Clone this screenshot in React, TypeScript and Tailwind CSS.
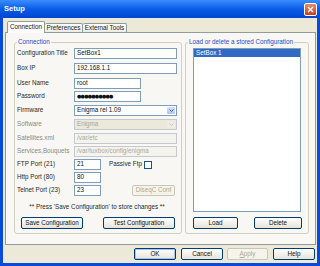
import type { ReactNode } from "react";

const LABEL = "text-[#2a2a2a]";
const DIM = "text-[#8a8a80]";

function XpButton({
  children,
  className,
  disabled,
  isDefault,
}: {
  children: ReactNode;
  className: string;
  disabled?: boolean;
  isDefault?: boolean;
}) {
  if (disabled) {
    return (
      <div
        className={`flex h-[12px] shrink-0 items-center justify-center rounded-[2px] border border-[#c9c7ba] bg-[#f5f4ea] text-[#aca899] ${className}`}
      >
        {children}
      </div>
    );
  }
  return (
    <div
      className={`flex h-[12px] shrink-0 items-center justify-center rounded-[2px] border border-[#003c74] bg-linear-to-b from-white to-[#e6e3d8] text-[#111] ${
        isDefault ? "shadow-[inset_0_0_0_1px_#a9c2ef]" : ""
      } ${className}`}
    >
      {children}
    </div>
  );
}

function Field({
  value,
  className,
  disabled,
  children,
}: {
  value?: string;
  className: string;
  disabled?: boolean;
  children?: ReactNode;
}) {
  return (
    <div
      className={`flex h-[11px] shrink-0 items-center border pl-[2px] ${
        disabled
          ? "border-[#c4c9cf] bg-[#f4f3ee] text-[#aca899]"
          : "border-[#7f9db9] bg-white text-[#111]"
      } ${className}`}
    >
      {children ?? value}
    </div>
  );
}

function Combo({ value, disabled }: { value: string; disabled?: boolean }) {
  return (
    <div
      className={`flex h-[11px] w-[103px] shrink-0 items-stretch border ${
        disabled ? "border-[#c4c9cf] bg-[#ebe9da] text-[#aca899]" : "border-[#7f9db9] bg-white text-[#111]"
      }`}
    >
      <span className="flex flex-1 items-center pl-[2px]">{value}</span>
      <span
        className={`m-px flex w-[8px] items-center justify-center rounded-[1px] ${
          disabled ? "bg-[#eeede5]" : "bg-linear-to-b from-[#d2e0fd] to-[#b1c6f6]"
        }`}
      >
        <svg width="5" height="3" viewBox="0 0 5 3">
          <path
            d="M0.5 0.5 L2.5 2.5 L4.5 0.5"
            fill="none"
            stroke={disabled ? "#c9c7ba" : "#4d6185"}
            strokeWidth="1"
          />
        </svg>
      </span>
    </div>
  );
}

function Row({
  label,
  className,
  dim,
  children,
}: {
  label: string;
  className: string;
  dim?: boolean;
  children: ReactNode;
}) {
  return (
    <div className={`flex h-[11px] items-center ${className}`}>
      <span className={`w-[57px] shrink-0 whitespace-nowrap ${dim ? DIM : LABEL}`}>{label}</span>
      {children}
    </div>
  );
}

function GroupBox({
  title,
  className,
  children,
}: {
  title: string;
  className: string;
  children: ReactNode;
}) {
  return (
    <div className={`relative flex h-[192px] shrink-0 flex-col rounded-[3px] border border-[#d0d0bf] pt-[5px] ${className}`}>
      <span className="absolute -top-[5px] left-[2px] bg-[#f8f7f3] px-[1px] leading-[8px] whitespace-nowrap text-[#1f4bc8]">
        {title}
      </span>
      {children}
    </div>
  );
}

export default function App() {
  return (
    <div className="flex h-[266px] w-[320px] flex-col overflow-hidden bg-[#0a4ad8] font-['Liberation_Sans',Arial,sans-serif] text-[6.3px] leading-none">
      <div className="flex h-[18px] shrink-0 items-center bg-linear-to-b from-[#3a8dff] via-[#0a5be6] to-[#0046d0] pl-[4px]">
        <span className="text-[7.5px] font-bold text-white">Setup</span>
        <div className="mr-[3px] ml-auto flex h-[13px] w-[13px] items-center justify-center rounded-[2px] border border-white bg-linear-to-b from-[#e98a6a] to-[#c5401d]">
          <svg width="7" height="7" viewBox="0 0 7 7">
            <path d="M1 1 L6 6 M6 1 L1 6" stroke="white" strokeWidth="1.4" />
          </svg>
        </div>
      </div>

      <div className="flex flex-1 flex-col border-x-[3px] border-b-[3px] border-[#0a4ad8] bg-[#ece9d8] pt-[3px] pr-[1px] pl-[2px]">
        <div className="flex h-[11px] shrink-0 items-end pl-[2px]">
          <div className="relative z-10 -mb-px flex h-[12px] w-[38px] items-center justify-center rounded-t-[2px] border-x border-t border-[#919b9c] bg-[#fcfcfe] text-[#111]">
            Connection
          </div>
          <div className="flex h-[9px] w-[38px] items-center justify-center rounded-t-[2px] border-t border-r border-[#919b9c] bg-linear-to-b from-white to-[#ecebe5] text-[#222]">
            Preferences
          </div>
          <div className="flex h-[9px] w-[44px] items-center justify-center rounded-t-[2px] border-t border-r border-[#919b9c] bg-linear-to-b from-white to-[#ecebe5] text-[#222]">
            External Tools
          </div>
        </div>

        <div className="flex h-[213px] shrink-0 items-start gap-[3px] border border-[#919b9c] bg-[#f8f7f3] pt-[9px] pl-[8px]">
          <GroupBox title="Connection" className="w-[168px] pr-[4px] pl-[2px]">
            <Row label="Configuration Title" className="">
              <Field value="SetBox1" className="w-[103px]" />
            </Row>
            <Row label="Box IP" className="mt-[4px]">
              <Field value="192.168.1.1" className="w-[103px]" />
            </Row>
            <Row label="User Name" className="mt-[4px]">
              <Field value="root" className="w-[67px]" />
            </Row>
            <Row label="Password" className="mt-[2px]">
              <Field className="w-[67px]">
                <span className="font-['DejaVu_Sans',sans-serif] text-[5px] tracking-[-0.8px] text-[#111]">
                  ●●●●●●●●●●
                </span>
              </Field>
            </Row>
            <Row label="Firmware" className="mt-[3px]">
              <Combo value="Enigma rel 1.09" />
            </Row>
            <Row label="Software" className="mt-[3px]" dim>
              <Combo value="Enigma" disabled />
            </Row>
            <Row label="Satellites.xml" className="mt-[3px]" dim>
              <Field value="/var/etc" className="w-[103px]" disabled />
            </Row>
            <Row label="Services,Bouquets" className="mt-[2px]" dim>
              <Field value="/var/tuxbox/config/enigma" className="w-[103px]" disabled />
            </Row>
            <Row label="FTP Port (21)" className="mt-[2px]">
              <Field value="21" className="w-[27px]" />
              <span className={`ml-[8px] ${LABEL}`}>Passive Ftp</span>
              <span className="ml-[2px] h-[8px] w-[8px] border border-[#1c5180] bg-white" />
            </Row>
            <Row label="Http Port (80)" className="mt-[2px]">
              <Field value="80" className="w-[27px]" />
            </Row>
            <Row label="Telnet Port (23)" className="mt-[2px]">
              <Field value="23" className="w-[27px]" />
              <XpButton disabled className="ml-[31px] !h-[11px] w-[43px]">
                DiseqC Conf
              </XpButton>
            </Row>
            <p className={`mt-[7px] text-center leading-[8px] whitespace-nowrap ${LABEL}`}>
              ** Press 'Save Configuration' to store changes **
            </p>
            <div className="mt-[6px] flex pl-[4px]">
              <XpButton className="w-[62px]">Save Configuration</XpButton>
              <XpButton className="ml-[20px] w-[72px]">Test Configuration</XpButton>
            </div>
          </GroupBox>

          <GroupBox title="Load or delete a stored Configuration" className="w-[124px] pl-[7px]">
            <div className="h-[164px] w-[108px] border border-[#7f9db9] bg-white">
              <div className="flex h-[8px] items-center bg-[#316ac5] pl-[2px] text-white">SetBox 1</div>
            </div>
            <div className="mt-[5px] flex">
              <XpButton className="w-[45px]">Load</XpButton>
              <XpButton className="ml-[16px] w-[48px]">Delete</XpButton>
            </div>
          </GroupBox>
        </div>

        <div className="mt-[3px] flex pl-[129px]">
          <XpButton isDefault className="w-[42px]">
            OK
          </XpButton>
          <XpButton className="ml-[5px] w-[42px]">Cancel</XpButton>
          <XpButton disabled className="ml-[4px] w-[41px]">
            <span className="underline">A</span>pply
          </XpButton>
          <XpButton className="ml-[5px] w-[42px]">Help</XpButton>
        </div>
      </div>
    </div>
  );
}
